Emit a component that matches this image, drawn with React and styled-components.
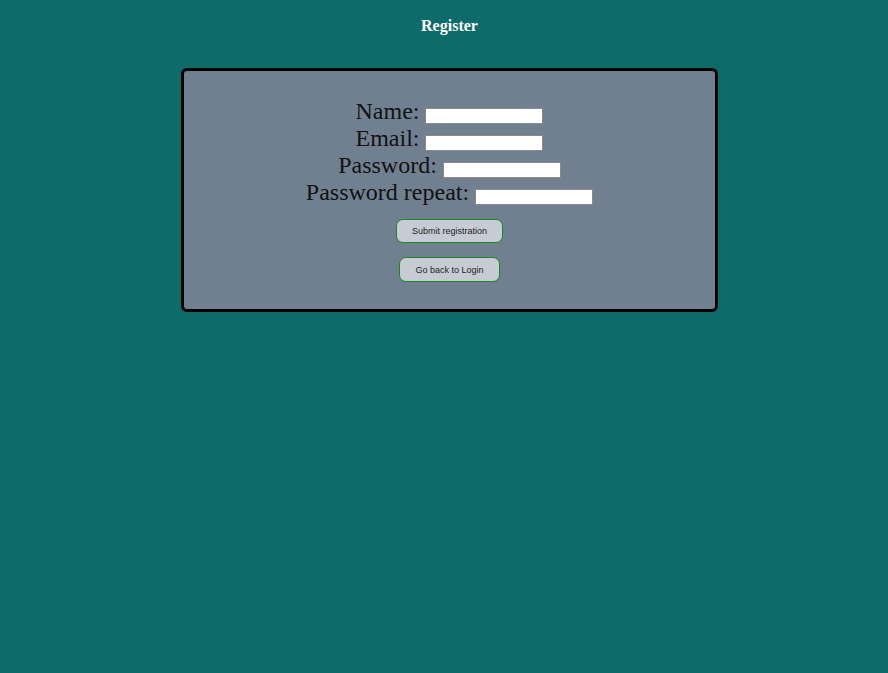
import React from 'react';
import styled, { createGlobalStyle } from 'styled-components';

const GlobalStyle = createGlobalStyle`
  html, body {
    margin: 0;
    padding: 0;
    background-color: #0d6b69;
    min-height: 100%;
  }
  body {
    font-family: 'Liberation Serif', 'Times New Roman', serif;
  }
`;

const Page = styled.div`
  display: flex;
  flex-direction: column;
  align-items: center;
  padding: 17px 0 0 11px;
  min-height: 673px;
  box-sizing: border-box;
`;

const Title = styled.h3`
  margin: 0 0 33px;
  font-size: 16px;
  line-height: 18px;
  font-weight: bold;
  color: #ffffff;
`;

const Card = styled.div`
  box-sizing: border-box;
  width: 537px;
  background-color: slategray;
  border: 3px solid #000;
  border-radius: 6px;
  padding: 27px 0 27px;
  display: flex;
  flex-direction: column;
  align-items: center;
`;

const Fields = styled.div`
  display: flex;
  flex-direction: column;
  align-items: center;
  margin-bottom: 13px;
`;

const FieldRow = styled.label`
  display: flex;
  align-items: flex-end;
  gap: 6px;
  font-size: 24px;
  line-height: 27px;
  color: #111;
`;

const Input = styled.input`
  width: 118px;
  height: 16px;
  box-sizing: border-box;
  margin: 0 0 1px;
  padding: 0 2px;
  border: 1px solid #8a8a8a;
  background: #fff;
  font-size: 11px;
`;

const Button = styled.button`
  font-family: 'Liberation Sans', Arial, sans-serif;
  font-size: 9px;
  line-height: 10px;
  color: #222;
  background-color: #c7ccd4;
  border: 1px solid #1a8a1a;
  border-radius: 7px;
  padding: 6px 15px 6px;
  height: ${p => p.$h || 24}px;
  margin-bottom: ${p => p.$gap || 0}px;
  cursor: pointer;
`;

export default function App() {
  return (
    <>
      <GlobalStyle />
      <Page>
        <Title>Register</Title>
        <Card>
          <Fields>
            <FieldRow>
              Name: <Input type="text" />
            </FieldRow>
            <FieldRow>
              Email: <Input type="email" />
            </FieldRow>
            <FieldRow>
              Password: <Input type="password" />
            </FieldRow>
            <FieldRow>
              Password repeat: <Input type="password" />
            </FieldRow>
          </Fields>
          <Button $gap={14}>Submit registration</Button>
          <Button $h={25}>Go back to Login</Button>
        </Card>
      </Page>
    </>
  );
}
